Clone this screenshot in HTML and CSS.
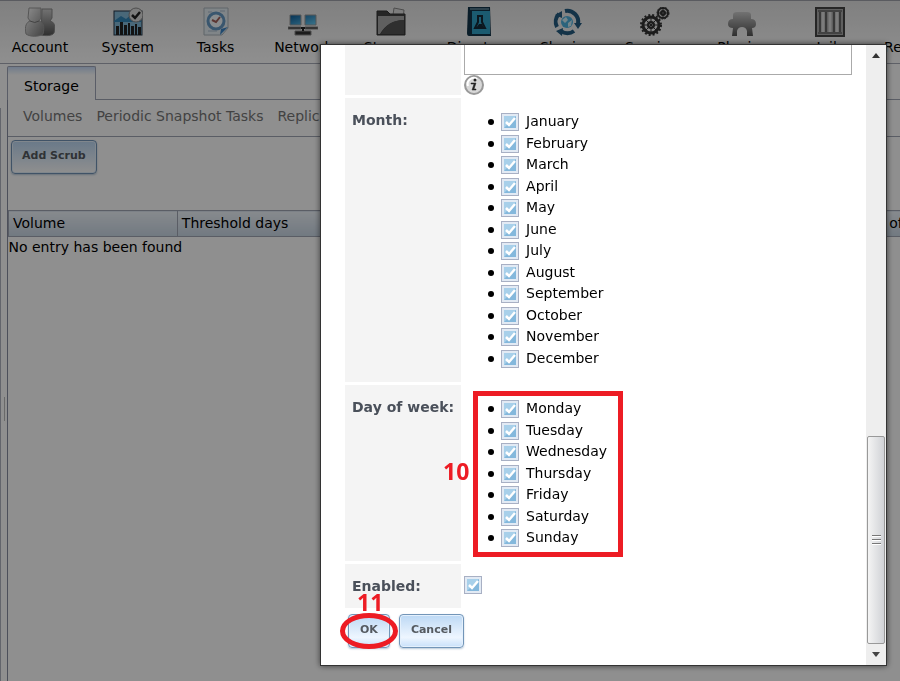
FILE: index.html
```html
<!DOCTYPE html>
<html lang="en">
<head>
  <meta charset="UTF-8">
  <meta name="viewport" content="width=device-width, initial-scale=1.0">
  <title>Storage - Add Scrub</title>
  <link rel="stylesheet" href="styles.css">
</head>
<body>
  <nav class="toolbar">
    <a href="#account">
      <svg width="30" height="30" viewBox="0 0 30 30">
        <defs>
          <linearGradient id="silver" x1="0" y1="0" x2="1" y2="1"><stop offset="0" stop-color="#fff"/><stop offset="1" stop-color="#777"/></linearGradient>
          <linearGradient id="dark" x1="0" y1="0" x2="0" y2="1"><stop offset="0" stop-color="#ccc"/><stop offset="1" stop-color="#555"/></linearGradient>
          <linearGradient id="blue" x1="0" y1="0" x2="1" y2="1"><stop offset="0" stop-color="#0a5a98"/><stop offset="1" stop-color="#6ad0f8"/></linearGradient>
        </defs>
        <path d="M17 2h10v9l-2 3c4 1 6 4 4 12-2 3-8 3-13 2z" fill="url(#dark)" stroke="#888"/>
        <path d="M4 1h12v10l-2 3c4 1 6 5 4 13-4 3-13 3-17 0-2-8 1-12 4-13l-2-3z" fill="url(#silver)" stroke="#999"/>
        <path d="M5 14q5 3 9 0" fill="none" stroke="#777"/>
      </svg>
      <span>Account</span>
    </a>
    <a href="#system">
      <svg width="30" height="30" viewBox="0 0 30 30">
        <rect x="1" y="4" width="28" height="24" fill="#82b9d8" stroke="#234"/>
        <path d="M1 14l7-5 5 3 6-5 9 4v4H1z" fill="#3186b8"/>
        <path d="M3 28V19h3v9zM7 28V15h3v13zM11 28V18h3v10zM15 28V16h2v12zM18 28V19h3v9zM22 28V17h2v11zM25 28V20h3v8z" fill="#222"/>
        <circle cx="23" cy="8" r="7" fill="#ddd" stroke="#888"/>
        <path d="M19 8l3 3 5-6" fill="none" stroke="#222" stroke-width="2.5"/>
      </svg>
      <span>System</span>
    </a>
    <a href="#tasks">
      <svg width="30" height="30" viewBox="0 0 30 30">
        <path d="M3 1h24v20l-6 7H3z" fill="#e5eef3" stroke="#aab4bc"/>
        <path d="M27 20l-8 8 1-6z" fill="#3b83c4"/>
        <circle cx="15" cy="14" r="8" fill="#f4fafd" stroke="#6799c4" stroke-width="3"/>
        <path d="M11 13l4 2 4-5" fill="none" stroke="#a3605a" stroke-width="2"/>
        <path d="M7 5h4M19 4h5M7 24h9" stroke="#abc"/>
      </svg>
      <span>Tasks</span>
    </a>
    <a href="#network">
      <svg width="30" height="30" viewBox="0 0 30 30">
        <path d="M2 8h11v10H2zM17 8h11v10H17z" fill="url(#blue)" stroke="#999"/>
        <path d="M0 20h13v2H0zM17 20h13v2H17zM7 24h16v4H7z" fill="#333" stroke="#888"/>
        <path d="M13 21h4M15 22v2" stroke="#222" stroke-width="2"/>
      </svg>
      <span>Network</span>
    </a>
    <a href="#storage">
      <svg width="30" height="30" viewBox="0 0 30 30">
        <path d="M17 8l1-7 10 2-1 9z" fill="#ddd" stroke="#888"/>
        <path d="M1 4h10l3 3h15v21H1z" fill="#444" stroke="#333"/>
        <path d="M2 9h26v4Q12 13 4 27H2z" fill="#aaa"/>
        <path d="M5 27q7-14 23-14v14z" fill="#555"/>
      </svg>
      <span>Storage</span>
    </a>
    <a href="#directory">
      <svg width="30" height="30" viewBox="0 0 30 30">
        <path d="M4 0h22l1 29H5q-2 0-2-3z" fill="#123449"/>
        <path d="M8 4h18v23H8z" fill="#31a3c8"/>
        <path d="M6 2h19" stroke="#8fb7c8"/>
        <path d="M13 9h6M14 10v5l-3 6h10l-3-6v-5" fill="none" stroke="#152a38" stroke-width="2"/>
        <path d="M12 21l3-4h3l2 4z" fill="#152a38"/>
      </svg>
      <span>Directory</span>
    </a>
    <a href="#sharing">
      <svg width="30" height="30" viewBox="0 0 30 30">
        <g fill="none" stroke="#245c80" stroke-width="4"><path d="M13 4A11 11 0 0 1 26 17"/><path d="M22 24A11 11 0 0 1 9 24"/><path d="M5 20A11 11 0 0 1 7 7"/></g>
        <path d="M22 16h8l-4 6zM11 21l-1 8-6-5zM3 8l7-4v7z" fill="#245c80"/>
        <circle cx="15" cy="15" r="6" fill="#4db0de"/>
        <path d="M10 13l4-3 2 3-3 3zM16 16l4-3-1 6-3 1z" fill="#d0edf7"/>
      </svg>
      <span>Sharing</span>
    </a>
    <a href="#services">
      <svg width="30" height="30" viewBox="0 0 30 30">
        <g fill="none" stroke="#333">
          <circle cx="11" cy="18" r="8" stroke-width="3"/><circle cx="11" cy="18" r="10" stroke-width="2" stroke-dasharray="2 2"/><circle cx="11" cy="18" r="3" stroke-width="2"/>
          <path d="M11 10v16M3 18h16M5 12l12 12M17 12L5 24"/>
          <circle cx="23" cy="6" r="5" stroke-width="2"/><circle cx="23" cy="6" r="6" stroke-dasharray="2 1"/><circle cx="23" cy="6" r="2" stroke-width="2"/>
          <path d="M23 1v10M18 6h10"/>
        </g>
      </svg>
      <span>Services</span>
    </a>
    <a href="#plugins">
      <svg width="30" height="30" viewBox="0 0 30 30">
        <path d="M6 8q0-3 4-3h10q4 0 4 3v4q5 0 5 5 0 4-4 4l1 8h-6v-5q-1-4-5-4t-5 4v5H5l1-8q-5 0-5-4 0-5 5-5z" fill="url(#dark)"/>
      </svg>
      <span>Plugins</span>
    </a>
    <a href="#jails">
      <svg width="30" height="30" viewBox="0 0 30 30">
        <rect x="1" y="1" width="28" height="28" fill="#aaa" stroke="#444" stroke-width="2"/>
        <path d="M5 4v22M11 4v22M19 4v22M25 4v22" stroke="#666" stroke-width="2"/>
        <path d="M8 4v22M15 4v22M22 4v22" stroke="#ddd" stroke-width="3"/>
        <path d="M3 4h24M3 26h24" stroke="#777" stroke-width="2"/>
      </svg>
      <span>Jails</span>
    </a>
    <a href="#reporting">
      <svg width="30" height="30" viewBox="0 0 30 30"><path d="M3 28V16h6v12zM12 28V9h6v19zM21 28V3h6v25z" fill="#555"/></svg>
      <span>Reporting</span>
    </a>
  </nav>

  <div class="workspace">
    <div class="splitter"><i></i></div>
    <main class="main">
      <div class="tabs"><a class="tab" href="#storage">Storage</a></div>
      <div class="pane">
        <div class="subtabs">
          <a href="#volumes">Volumes</a>
          <a href="#snapshots">Periodic Snapshot Tasks</a>
          <a href="#replication">Replication Tasks</a>
        </div>
        <div class="actions"><button class="btn" type="button">Add Scrub</button></div>
        <table class="grid">
          <thead>
            <tr><th>Volume</th><th>Threshold days</th><th>Description</th><th>Minute</th><th>Hour</th><th>Day of month</th></tr>
          </thead>
          <tbody>
            <tr><td colspan="6">No entry has been found</td></tr>
          </tbody>
        </table>
      </div>
    </main>
  </div>

  <div class="overlay"></div>

  <div class="dialog" role="dialog" aria-label="Add Scrub">
    <form class="dialog-body">
      <table class="fields">
        <tr class="row-first">
          <th></th>
          <td>
            <textarea aria-label="Day of month"></textarea>
            <svg class="info" width="20" height="20" viewBox="0 0 20 20">
              <circle cx="10" cy="10" r="9" fill="#d8d8d8" stroke="#999" stroke-width="2"/>
              <path d="M4 11a6 6 0 0 1 9-7" fill="none" stroke="#fff" stroke-width="2"/>
              <circle cx="11" cy="5" r="1.5" fill="#222"/>
              <path d="M7 8h5l-2 6h2v1H8l2-6H7z" fill="#222" stroke="#222" stroke-width=".5"/>
            </svg>
          </td>
        </tr>
        <tr class="row-month">
          <th>Month:</th>
          <td>
            <ul class="months">
              <li><label><input type="checkbox" checked> January</label></li>
              <li><label><input type="checkbox" checked> February</label></li>
              <li><label><input type="checkbox" checked> March</label></li>
              <li><label><input type="checkbox" checked> April</label></li>
              <li><label><input type="checkbox" checked> May</label></li>
              <li><label><input type="checkbox" checked> June</label></li>
              <li><label><input type="checkbox" checked> July</label></li>
              <li><label><input type="checkbox" checked> August</label></li>
              <li><label><input type="checkbox" checked> September</label></li>
              <li><label><input type="checkbox" checked> October</label></li>
              <li><label><input type="checkbox" checked> November</label></li>
              <li><label><input type="checkbox" checked> December</label></li>
            </ul>
          </td>
        </tr>
        <tr class="row-week">
          <th>Day of week:</th>
          <td>
            <ul class="days">
              <li><label><input type="checkbox" checked> Monday</label></li>
              <li><label><input type="checkbox" checked> Tuesday</label></li>
              <li><label><input type="checkbox" checked> Wednesday</label></li>
              <li><label><input type="checkbox" checked> Thursday</label></li>
              <li><label><input type="checkbox" checked> Friday</label></li>
              <li><label><input type="checkbox" checked> Saturday</label></li>
              <li><label><input type="checkbox" checked> Sunday</label></li>
            </ul>
            <div class="mark-box"></div>
            <span class="mark-num mark-ten">10</span>
          </td>
        </tr>
        <tr class="row-enabled">
          <th><label for="enabled">Enabled:</label></th>
          <td><input type="checkbox" id="enabled" checked></td>
        </tr>
      </table>
      <div class="buttons">
        <div class="ok">
          <button class="btn" type="submit">OK</button>
          <div class="mark-ring"></div>
          <span class="mark-num mark-eleven">11</span>
        </div>
        <button class="btn" type="button">Cancel</button>
      </div>
    </form>
    <div class="scrollbar">
      <svg width="10" height="6" viewBox="0 0 10 6"><path d="M1 6l4-5 4 5z" fill="#333"/></svg>
      <div class="thumb"><i></i><i></i><i></i></div>
      <svg width="10" height="6" viewBox="0 0 10 6"><path d="M1 0l4 5 4-5z" fill="#444"/></svg>
    </div>
  </div>
</body>
</html>
```
FILE: styles.css
```css
* {
  box-sizing: border-box;
}

body {
  margin: 0;
  height: 100vh;
  display: flex;
  flex-direction: column;
  overflow: hidden;
  background: #fff;
  color: #000;
  font-family: "DejaVu Sans", Verdana, sans-serif;
  font-size: 14px;
  line-height: 20px;
}

a {
  color: inherit;
  text-decoration: none;
}

/* top toolbar, runs off the right edge */
.toolbar {
  display: grid;
  grid-template-columns: repeat(11, 1fr);
  margin: 0 -62px 0 -4px;
  height: 64px;
  border-top: 1px solid #a0a3ab;
  border-bottom: 1px solid #a8acb8;
  background: linear-gradient(#e4e4e4, #fff);
}
.toolbar a {
  display: flex;
  flex-direction: column;
  align-items: center;
  padding-top: 6px;
}
.toolbar svg {
  flex: none;
}

.workspace {
  flex: 1;
  display: flex;
  padding-top: 2px;
}
.splitter {
  width: 7px;
  flex: none;
  display: flex;
  align-items: center;
  justify-content: center;
  margin-top: 42px;
  border-left: 1px solid #b0b4c0;
}
.splitter i {
  width: 1px;
  height: 24px;
  margin-top: 28px;
  background: #bbb;
}
.main {
  flex: 1;
  min-width: 0;
  overflow: hidden;
}
.tabs {
  display: flex;
  border-bottom: 1px solid #a0a6b4;
  height: 34px;
}
.tab {
  height: 34px;
  padding: 9px 16px 0;
  border: 1px solid #a0a6b8;
  border-bottom: none;
  border-radius: 2px 2px 0 0;
  background: linear-gradient(#c8dcf8, #fff 8px);
}
.pane {
  border-left: 1px solid #888ea0;
  height: 100%;
}
.subtabs {
  display: flex;
  gap: 14px;
  height: 37px;
  padding: 6px 15px 0;
  white-space: nowrap;
  color: #777;
  border-bottom: 1px solid #a0a6b4;
}
.actions {
  height: 73px;
  padding: 3px;
}

.btn {
  height: 34px;
  padding: 0 10px 3px;
  border: 1px solid #7295b8;
  border-radius: 4px;
  background: linear-gradient(#bcd8f4, #eef6ff 70%, #c8e0fa);
  box-shadow: 0 1px 2px #b8c8d8, inset 0 0 0 1px #e4f0fc;
  color: #555a60;
  font-family: inherit;
  font-size: 11px;
  font-weight: bold;
}
.buttons .btn {
  padding: 0 11px 3px;
}
.actions .btn {
  background: linear-gradient(#bcd8f4, #fff);
}

.grid {
  table-layout: fixed;
  width: 1014px;
  border-collapse: collapse;
}
.grid th {
  height: 26px;
  padding: 0 4px 1px;
  border: 1px solid #a0a6b4;
  background: linear-gradient(#f0f6fc, #cbd8e6);
  font-weight: normal;
  text-align: left;
}
.grid td {
  padding: 0;
}

.overlay {
  position: fixed;
  inset: 0;
  background: rgba(0, 0, 0, 0.44);
}

/* scrub form */
.dialog {
  position: fixed;
  inset: 44px 13px 15px 320px;
  display: flex;
  overflow: hidden;
  border: 1px solid #333;
  background: #fff;
  box-shadow: 0 0 6px rgba(0, 0, 0, 0.6);
}
.dialog-body {
  flex: 1;
  min-width: 0;
  padding: 0 11px 0 21px;
}
.fields {
  width: 100%;
  border-spacing: 3px;
  margin-top: -11px;
}
.fields th {
  width: 116px;
  padding: 12px 7px;
  background: #f4f4f4;
  color: #4a505a;
  text-align: left;
  vertical-align: top;
  white-space: nowrap;
}
.fields td {
  position: relative;
  padding: 0;
  vertical-align: top;
}
.row-first {
  height: 58px;
}
.row-month {
  height: 284px;
}
.row-week {
  height: 176px;
}
.row-enabled {
  height: 43px;
}
.row-enabled td {
  padding-top: 12px;
}

textarea {
  display: block;
  width: 100%;
  height: 38px;
  border: 1px solid #aaa;
  border-radius: 0;
  resize: none;
}
.info {
  display: block;
}

ul {
  display: grid;
  grid-auto-rows: 1fr;
  margin: 0;
  padding: 0 0 0 24px;
  list-style: none;
}
.months {
  height: 258px;
  margin-top: 13px;
}
.days {
  height: 151px;
  margin-top: 13px;
}
li {
  display: flex;
  gap: 7px;
}
li::before {
  content: "";
  width: 6px;
  height: 6px;
  margin-top: 8px;
  border-radius: 50%;
  background: #000;
}
li label {
  display: flex;
  gap: 7px;
}

input[type="checkbox"] {
  appearance: none;
  flex: none;
  display: block;
  width: 18px;
  height: 18px;
  margin: 0;
  border: 1px solid #a8b0c4;
  background: #e2eaf4 url("data:image/svg+xml,%3Csvg xmlns='http://www.w3.org/2000/svg' viewBox='0 0 16 16'%3E%3Crect x='2' y='2' width='12' height='12' fill='%2384b8dc'/%3E%3Cpath d='M2 2h12L2 14z' fill='%23a8d0ea'/%3E%3Cpath d='M4 8l3 3 6-7' fill='none' stroke='%23fff' stroke-width='2.5'/%3E%3C/svg%3E");
}
li input[type="checkbox"] {
  margin-top: 2px;
}

.buttons {
  display: flex;
  gap: 9px;
  padding: 3px 6px;
}
.ok {
  position: relative;
}

/* step annotations */
.mark-box {
  position: absolute;
  inset: 6px auto auto 9px;
  width: 150px;
  height: 166px;
  border: 5px solid #ed1c24;
}
.mark-num {
  position: absolute;
  color: #ed1c24;
  font-family: "Open Sans", sans-serif;
  font-size: 23px;
  font-weight: bold;
  line-height: 24px;
}
.mark-ten {
  left: -21px;
  top: 74px;
}
.mark-ring {
  position: absolute;
  left: -8px;
  top: -1px;
  width: 58px;
  height: 36px;
  border: 5px solid #ed1c24;
  border-radius: 50%;
}
.mark-eleven {
  left: 9px;
  top: -24px;
}

.scrollbar {
  width: 20px;
  flex: none;
  display: flex;
  flex-direction: column;
  align-items: center;
  padding: 7px 0;
  background: #eee;
}
.thumb {
  width: 18px;
  height: 208px;
  margin-top: auto;
  margin-bottom: 8px;
  display: flex;
  flex-direction: column;
  align-items: center;
  justify-content: center;
  gap: 2px;
  border: 1px solid #999;
  border-radius: 2px;
  background: linear-gradient(90deg, #f4f4f4, #d0d2d6);
}
.thumb i {
  width: 9px;
  height: 2px;
  background: #777;
  border-bottom: 1px solid #fff;
}
```
